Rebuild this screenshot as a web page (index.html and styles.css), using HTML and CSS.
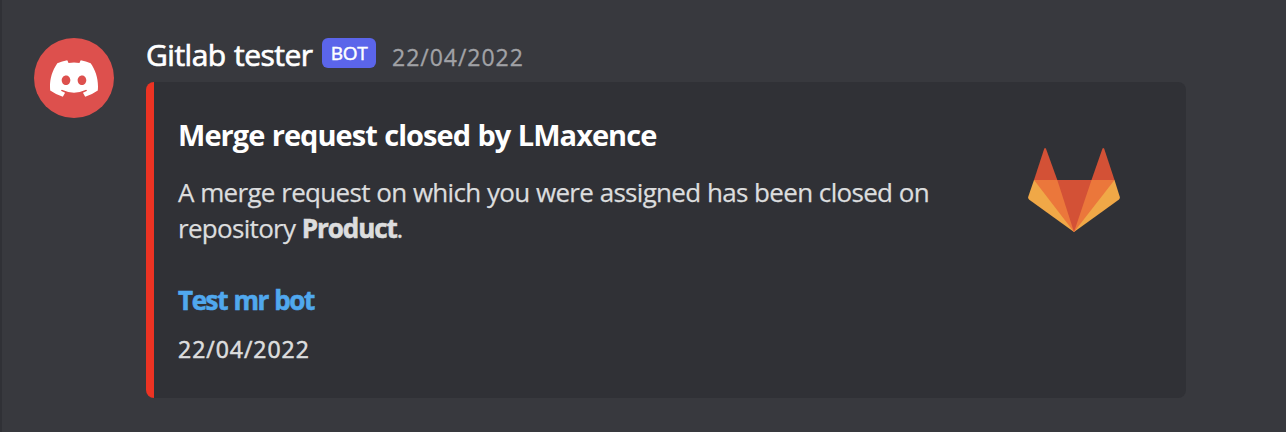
FILE: index.html
```html
<!DOCTYPE html>
<html lang="en">
<head>
<meta charset="utf-8">
<title>Gitlab tester</title>
<link rel="stylesheet" href="styles.css">
</head>
<body>
<article class="message">
  <div class="avatar">
    <svg class="avatar-logo" viewBox="0 0 127.14 96.36" aria-hidden="true"><path d="M107.7,8.07A105.15,105.15,0,0,0,81.47,0a72.06,72.06,0,0,0-3.36,6.83A97.68,97.68,0,0,0,49,6.83,72.37,72.37,0,0,0,45.64,0,105.89,105.89,0,0,0,19.39,8.09C2.79,32.65-1.71,56.6.54,80.21h0A105.73,105.73,0,0,0,34,96.36L40,86L28.75,80.3L31.41,78.07a75.57,75.57,0,0,0,64.32,0L98.4,80.3L87.2,86L93.2,96.36A105.25,105.25,0,0,0,126.6,80.22h0C129.24,52.84,122.09,29.11,107.7,8.07ZM42.45,65.69C36.18,65.69,31,60,31,53s5-12.74,11.43-12.74S54,46,53.89,53,48.84,65.69,42.45,65.69Zm42.24,0C78.41,65.69,73.25,60,73.25,53s5-12.74,11.44-12.74S96.23,46,96.12,53,91.08,65.69,84.69,65.69Z"/></svg>
  </div>
  <div class="content">
    <header class="header">
      <span class="author">Gitlab tester</span>
      <span class="badge">BOT</span>
      <time class="timestamp">22/04/2022</time>
    </header>
    <section class="embed">
      <div class="embed-body">
        <h1 class="title">Merge request closed by LMaxence</h1>
        <p class="description">A merge request on which you were assigned has been closed on<br>repository <strong>Product</strong>.</p>
        <a class="link">Test mr bot</a>
        <time class="footer">22/04/2022</time>
      </div>
      <svg class="thumbnail" viewBox="0 0 92 84" aria-hidden="true">
        <path fill="#d35136" d="M6 32 16.2.8q.8-1.6 1.8 0L29.3 32Z"/>
        <path fill="#d35136" d="M63.5 32 74.4.8q.8-1.6 1.8 0L86.5 32Z"/>
        <path fill="#f0a847" d="M6 32 .3 48.5q-.6 2 1 3.3L46 84 90.7 51.8q1.6-1.3 1-3.3L86.5 32Z"/>
        <path fill="#eb773b" d="M6 32H86.5L46 84Z"/>
        <path fill="#d35136" d="M29.3 32H63.5L46 84Z"/>
      </svg>
    </section>
  </div>
</article>
</body>
</html>
```
FILE: styles.css
```css
* { box-sizing: border-box; }
body {
  margin: 0;
  height: 432px;
  overflow: hidden;
  background: #38393e;
  border-left: 2px solid #303136;
  font-family: "Open Sans", "Noto Sans", sans-serif;
  color: #dcddde;
}
.message { display: flex; gap: 32px; padding: 38px 0 0 32px; }
.avatar {
  display: flex; align-items: center; justify-content: center;
  width: 80px; height: 80px; border-radius: 50%; background: #dd504d;
}
.avatar-logo { width: 48px; height: 37px; fill: #fff; }
.content { width: 1040px; }
.header { display: flex; height: 44px; white-space: nowrap; }
.author { width: 176px; font-size: 30px; line-height: 34px; letter-spacing: -0.5px; word-spacing: 1px; -webkit-text-stroke: 0.7px; color: #fff; }
.badge {
  width: 54px; height: 30px; border-radius: 6px; background: #5b65ea;
  color: #fff; font-size: 19px; line-height: 30px; letter-spacing: -0.3px; -webkit-text-stroke: 0.5px; text-align: center;
}
.timestamp { margin-left: 16px; font-size: 23px; line-height: 39px; letter-spacing: 0.98px; -webkit-text-stroke: 0.3px; color: #a1a2a6; }
.embed {
  display: flex; justify-content: space-between;
  height: 316px; padding: 32px 66px 0 24px;
  background: #303136; border-left: 8px solid #ec3323; border-radius: 8px;
}
.embed-body { display: flex; flex-direction: column; white-space: nowrap; }
.title { margin: 0; font-size: 29px; line-height: 42px; font-weight: 700; letter-spacing: -0.96px; word-spacing: 0.8px; color: #fff; }
.description { margin: 18px 0 0; font-size: 26px; line-height: 36px; letter-spacing: -0.69px; word-spacing: 0.4px; -webkit-text-stroke: 0.25px; }
.description strong { font-weight: 700; letter-spacing: -1.1px; -webkit-text-stroke: 0.6px; }
.link { margin-top: 37px; font-size: 26px; line-height: 34px; font-weight: 700; letter-spacing: -1.4px; word-spacing: 1px; -webkit-text-stroke: 0.6px; color: #50a8ee; }
.footer { margin-top: 16px; font-size: 23px; line-height: 32px; letter-spacing: 0.98px; -webkit-text-stroke: 0.6px; }
.thumbnail { width: 92px; height: 84px; margin-top: 34px; flex: none; }
```
